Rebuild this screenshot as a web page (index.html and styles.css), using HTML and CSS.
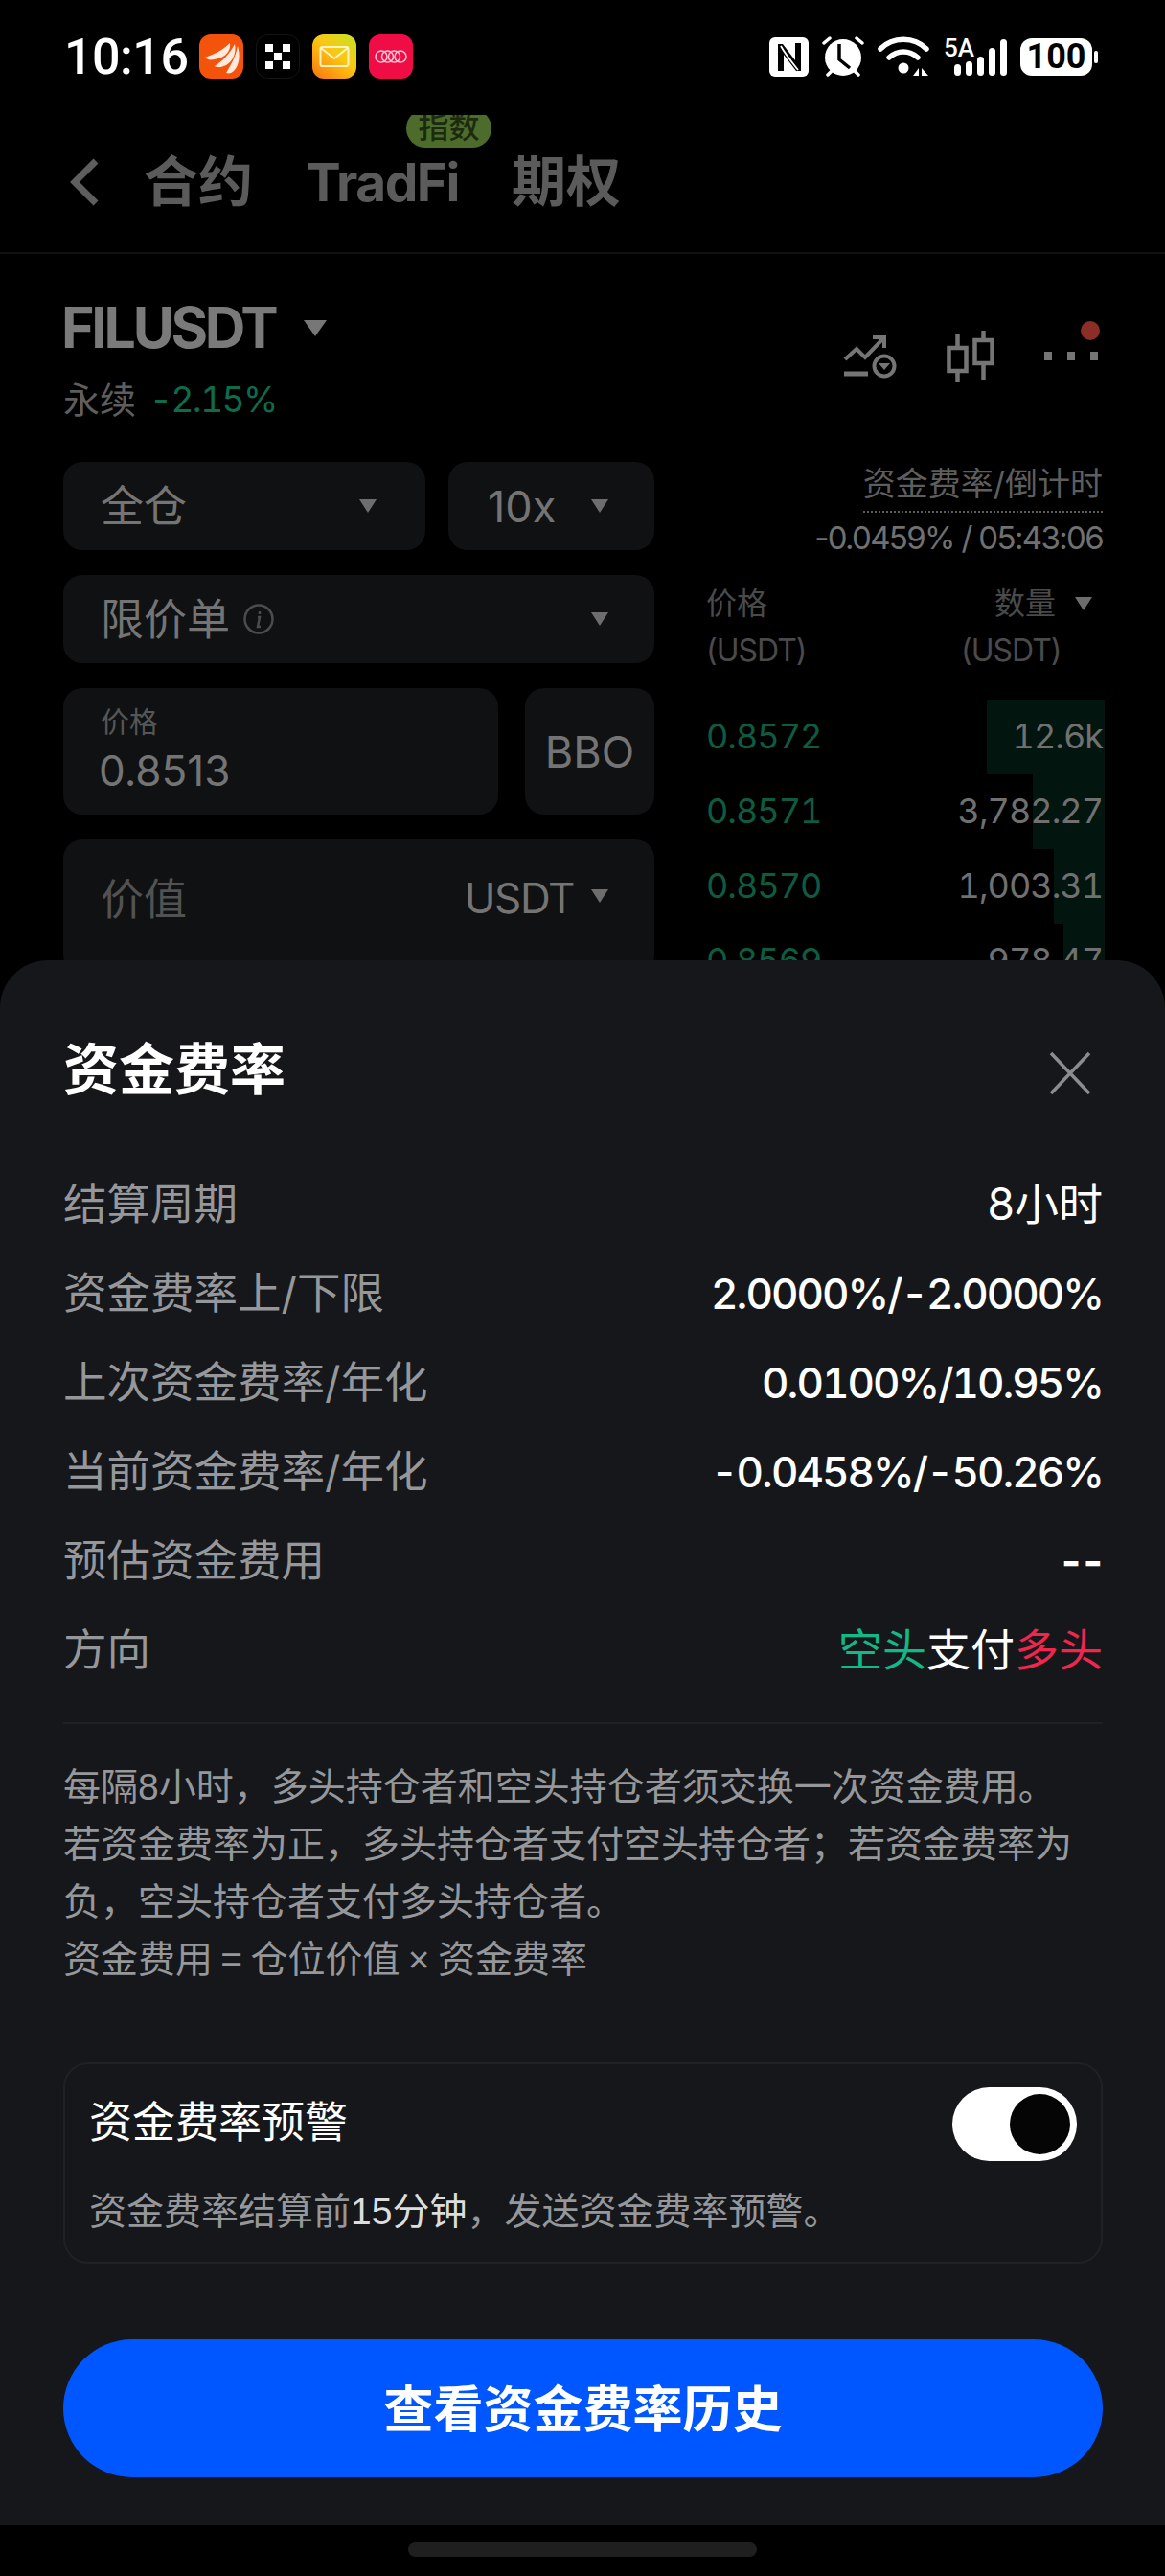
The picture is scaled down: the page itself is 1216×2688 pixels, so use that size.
FILE: index.html
```html
<!DOCTYPE html>
<html lang="zh-CN">
<head>
    <meta charset="UTF-8">
    <meta name="viewport" content="width=device-width, initial-scale=1.0">
    <title>资金费率</title>
    <link rel="stylesheet" href="styles.css">
</head>
<body>
<div class="screen">

    <!-- Status bar -->
    <div class="status">
        <span class="time">10:16</span>
        <div class="app-icons">
            <svg class="app" viewBox="0 0 46 46"><rect width="46" height="46" rx="12" fill="#f4530c"/><path d="M6 24C14 21 24 17 32 9c1 7-3 12-9 15-6 2-11 3-14 2z" fill="#ffe9dc"/><path d="M16 33c8-5 15-12 21-23 2 9-2 18-9 22-4 2-9 3-12 1z" fill="#ffe9dc"/><path d="M28 40c5-8 10-17 12-28 3 9 2 20-4 26-2 2-5 3-8 2z" fill="#ffe9dc"/></svg>
            <svg class="app" viewBox="0 0 46 46"><rect x=".5" y=".5" width="45" height="45" rx="12" fill="#000" stroke="#141414"/><path d="M10 10h8v8h-8zM28 10h8v8h-8zM19 19h8v8h-8zM10 28h8v8h-8zM28 28h8v8h-8z" fill="#fff"/></svg>
            <svg class="app" viewBox="0 0 46 46"><defs><linearGradient id="mailbg" x1="0.9" y1="0" x2="0.1" y2="1"><stop offset="0" stop-color="#c6e224"/><stop offset=".45" stop-color="#fbc712"/><stop offset="1" stop-color="#fb7a10"/></linearGradient></defs><rect width="46" height="46" rx="12" fill="url(#mailbg)"/><rect x="8.500" y="13" width="29" height="20" rx="2" fill="none" stroke="#fff3c4" stroke-width="2"/><path d="M9 14l14 11 14-11" fill="none" stroke="#fff3c4" stroke-width="2"/></svg>
            <svg class="app" viewBox="0 0 46 46"><rect width="46" height="46" rx="12" fill="#f00c45"/><g fill="none" stroke="#ffc6d4" stroke-width="1.600"><circle cx="13" cy="23" r="6"/><circle cx="19.500" cy="23" r="6"/><circle cx="26.500" cy="23" r="6"/><circle cx="33" cy="23" r="6"/></g></svg>
        </div>
        <div class="sys-icons">
            <svg class="sys-nfc" viewBox="0 0 41 41"><rect width="41" height="41" rx="6" fill="#fff"/><path d="M9 35V7h5l13 17V6h6v29h-5L15 18v17z" fill="#000"/><path d="M12 9c5 9 10 15 18 25" fill="none" stroke="#fff" stroke-width="1.800"/></svg>
            <svg class="sys-alarm" viewBox="0 0 44 42"><circle cx="22" cy="22" r="19" fill="#fff"/><path d="M2 7l6-5M42 7l-6-5M6 40l4-4M38 40l-4-4" stroke="#fff" stroke-width="3.500" stroke-linecap="round"/><path d="M18 8v16l11 9" fill="none" stroke="#000" stroke-width="3.500"/></svg>
            <svg class="sys-wifi" viewBox="0 0 55 42"><g fill="none" stroke="#fff" stroke-width="5.500" stroke-linecap="round"><path d="M3 13C16 0 38 0 51 13"/><path d="M12 22c9-8 21-8 30 0"/></g><circle cx="27" cy="33" r="5.500" fill="#fff"/><path d="M37 41l6-8v8zM46 33l7 8h-7z" fill="#fff"/></svg>
            <div class="signal">
                <span class="signal-label">5A</span>
                <div class="bars"><i class="bar1"></i><i class="bar2"></i><i class="bar3"></i><i class="bar4"></i><i class="bar5"></i></div>
            </div>
            <div class="battery"><span class="battery-body">100</span><i class="battery-nub"></i></div>
        </div>
    </div>

    <!-- Top tabs -->
    <div class="tabs">
        <svg class="back" viewBox="0 0 34 50"><path d="M29 3L7 25l22 22" fill="none" stroke="#5e5e5e" stroke-width="7"/></svg>
        <span class="tab">合约</span>
        <span class="tab tab-badged">TradFi<em class="badge">指数</em></span>
        <span class="tab">期权</span>
    </div>

    <!-- Dimmed market page -->
    <div class="market">
        <div class="symbol-row">
            <div>
                <div class="symbol">FILUSDT <i class="caret caret-lg"></i></div>
                <div class="symbol-sub"><span>永续</span><span class="down">-2.15%</span></div>
            </div>
            <div class="tools">
                <svg class="tool-alert" viewBox="0 0 56 46"><path d="M2 26l12-11 9 9L43 3M31 3h12v11" fill="none" stroke="#757575" stroke-width="4"/><path d="M1 41h25" stroke="#757575" stroke-width="5"/><circle cx="43" cy="33" r="10.500" fill="none" stroke="#757575" stroke-width="4"/><path d="M37 30h12l-6 7z" fill="#757575"/></svg>
                <svg class="tool-candle" viewBox="0 0 50 54"><g fill="none" stroke="#757575" stroke-width="4.500"><rect x="2.500" y="18" width="18" height="24"/><rect x="29.500" y="10" width="18" height="24"/><path d="M11.500 3v15M11.500 42v12M38.500 0v10M38.500 34v17"/></g></svg>
                <div class="tool-more"><i></i><i></i><i></i><em class="red-dot"></em></div>
            </div>
        </div>

        <div class="trade">
            <div class="form">
                <div class="form-row">
                    <div class="field field-margin"><span class="cjk">全仓</span><i class="caret"></i></div>
                    <div class="field field-lev"><span>10x</span><i class="caret"></i></div>
                </div>
                <div class="field field-type">
                    <span class="order-type"><span class="cjk">限价单</span>
                        <svg class="info" viewBox="0 0 32 32"><circle cx="16" cy="16" r="14.500" fill="none" stroke="#4c4c4c" stroke-width="2.500"/><path d="M17 8v3M15 14h2l-2 10h3" fill="none" stroke="#4c4c4c" stroke-width="2.500"/></svg>
                    </span>
                    <i class="caret"></i>
                </div>
                <div class="form-row form-row-price">
                    <div class="field field-price">
                        <span class="field-label">价格</span>
                        <span class="price-value">0.8513</span>
                    </div>
                    <div class="field field-bbo">BBO</div>
                </div>
                <div class="field field-amount">
                    <span class="muted">价值</span>
                    <span class="unit"><span class="unit-name">USDT</span><i class="caret"></i></span>
                </div>
            </div>

            <div class="book">
                <div class="funding">
                    <span class="funding-label">资金费率/倒计时</span>
                    <span class="funding-value">-0.0459% / 05:43:06</span>
                </div>
                <div class="book-head">
                    <div>价格<br><span class="book-unit">(USDT)</span></div>
                    <div class="book-head-right">数量 <i class="caret caret-sm"></i><br><span class="book-unit book-unit-right">(USDT)</span></div>
                </div>
                <div class="book-row"><i class="depth" style="width: 123px"></i><span class="ask">0.8572</span><span class="qty">12.6k</span></div>
                <div class="book-row"><i class="depth" style="width: 75px"></i><span class="ask">0.8571</span><span class="qty">3,782.27</span></div>
                <div class="book-row"><i class="depth" style="width: 53px"></i><span class="ask">0.8570</span><span class="qty">1,003.31</span></div>
                <div class="book-row"><i class="depth" style="width: 43px"></i><span class="ask">0.8569</span><span class="qty">978.47</span></div>
            </div>
        </div>
    </div>

    <!-- Funding rate sheet -->
    <div class="overlay">
        <div class="sheet">
            <div class="sheet-head">
                <h2 class="sheet-title">资金费率</h2>
                <svg class="close" viewBox="0 0 44 46"><path d="M2 2l40 42M42 2L2 44" fill="none" stroke="#8a8c8f" stroke-width="3.500"/></svg>
            </div>

            <div class="info-rows">
                <div class="info-row"><span>结算周期</span><b>8小时</b></div>
                <div class="info-row"><span>资金费率上/下限</span><b class="num">2.0000%/-2.0000%</b></div>
                <div class="info-row"><span>上次资金费率/年化</span><b class="num">0.0100%/10.95%</b></div>
                <div class="info-row"><span>当前资金费率/年化</span><b class="num">-0.0458%/-50.26%</b></div>
                <div class="info-row"><span>预估资金费用</span><b class="num dashes">--</b></div>
                <div class="info-row"><span>方向</span><b><span class="short">空头</span>支付<span class="long">多头</span></b></div>
            </div>

            <div class="note">
                每隔8小时，多头持仓者和空头持仓者须交换一次资金费用。<br>
                若资金费率为正，多头持仓者支付空头持仓者；若资金费率为<br>
                负，空头持仓者支付多头持仓者。<br>
                <span class="formula">资金费用 = 仓位价值 × 资金费率</span>
            </div>

            <div class="alert-card">
                <div class="alert-top">
                    <span class="alert-title">资金费率预警</span>
                    <div class="toggle"><i class="knob"></i></div>
                </div>
                <p class="alert-text">资金费率结算前<span class="hl">15分钟</span>，发送资金费率预警。</p>
            </div>

            <button class="history-btn"><span>查看资金费率历史</span></button>
        </div>
        <div class="nav-bar"><i class="home-pill"></i></div>
    </div>

</div>
</body>
</html>
```

FILE: styles.css
```css
* {
    box-sizing: border-box;
}
body {
    margin: 0;
    background: #000;
    font-family: Inter, "Noto Sans CJK SC", sans-serif;
}
i, em {
    font-style: normal;
}
.screen {
    position: relative;
    width: 1216px;
    height: 2688px;
    overflow: hidden;
    background: #000;
}

/* status bar */
.status {
    display: flex;
    align-items: center;
    height: 120px;
    padding: 0 70px 2px 67px;
}
.time {
    font-family: Roboto, sans-serif;
    font-size: 52px;
    font-weight: 500;
    letter-spacing: -0.500px;
    color: #fff;
    width: 141px;
}
.app-icons {
    display: flex;
    gap: 13px;
}
.app {
    width: 46px;
    height: 46px;
}
.sys-icons {
    margin-left: auto;
    display: flex;
    align-items: center;
    gap: 14px;
}
.sys-nfc {
    width: 41px;
    height: 41px;
}
.sys-alarm {
    width: 44px;
    height: 42px;
}
.sys-wifi {
    width: 55px;
    height: 42px;
}
.signal {
    position: relative;
    width: 66px;
    height: 42px;
}
.signal-label {
    position: absolute;
    left: 0;
    top: -3px;
    font-family: Roboto, sans-serif;
    font-size: 26px;
    font-weight: 500;
    line-height: 30px;
    color: #fff;
}
.bars {
    position: absolute;
    right: 0;
    bottom: 1px;
    display: flex;
    align-items: flex-end;
    gap: 4.500px;
}
.bars i {
    display: block;
    width: 7.500px;
    background: #fff;
    border-radius: 4px;
}
.bar1 { height: 12px; }
.bar2 { height: 15px; }
.bar3 { height: 20px; }
.bar4 { height: 29px; }
.bar5 { height: 38px; }
.battery {
    display: flex;
    align-items: center;
    gap: 2px;
}
.battery-body {
    width: 75px;
    height: 39px;
    background: #fff;
    border-radius: 12px;
    color: #000;
    font-family: Roboto, sans-serif;
    font-size: 36px;
    font-weight: 700;
    line-height: 39px;
    text-align: center;
}
.battery-nub {
    width: 4px;
    height: 13px;
    background: #fff;
    border-radius: 2px;
}

/* tabs */
.tabs {
    display: flex;
    align-items: center;
    height: 145px;
    padding: 0 0 4px 71px;
    overflow: hidden;
    border-bottom: 2px solid #101010;
}
.back {
    width: 34px;
    height: 50px;
    margin-right: 45px;
}
.tab {
    position: relative;
    font-size: 57px;
    font-weight: 700;
    color: #5b5b5b;
    margin-right: 55px;
    line-height: 64px;
}
.tab-badged {
    font-size: 55px;
    letter-spacing: -1.500px;
}
.badge {
    position: absolute;
    left: 105px;
    top: -44px;
    width: 89px;
    height: 40px;
    border-radius: 20px;
    background: #4d6b2b;
    color: #1c2b0d;
    font-size: 32px;
    font-weight: 500;
    line-height: 38px;
    letter-spacing: 0;
    text-align: center;
}

/* market page behind the sheet */
.market {
    padding: 47px 65px 0 66px;
}
.symbol-row {
    display: flex;
    justify-content: space-between;
}
.symbol {
    display: flex;
    align-items: center;
    gap: 30px;
    margin-left: -2px;
    font-size: 59px;
    font-weight: 700;
    line-height: 60px;
    letter-spacing: -3.300px;
    color: #7a7a7a;
}
.symbol-sub {
    display: flex;
    gap: 14px;
    margin-top: 23px;
    height: 41px;
    font-size: 38px;
    line-height: 44px;
    color: #5e5e5e;
}
.down {
    color: #0e6b4b;
    font-size: 37px;
    font-variant-numeric: tabular-nums;
    letter-spacing: -1.600px;
}
.caret {
    display: block;
    width: 0;
    height: 0;
    border-left: 9px solid transparent;
    border-right: 9px solid transparent;
    border-top: 14px solid #6d6d6d;
}
.symbol .caret-lg {
    border-left-width: 12px;
    border-right-width: 12px;
    border-top-width: 17px;
    border-top-color: #777;
}
.caret-sm {
    display: inline-block;
    margin: 0 3px 5px 11px;
    vertical-align: middle;
}
.tools {
    display: flex;
    align-items: flex-start;
    padding-top: 33px;
    gap: 52px;
    margin-right: 3px;
}
.tool-alert {
    width: 56px;
    height: 46px;
    margin-top: 4px;
}
.tool-candle {
    width: 50px;
    height: 54px;
}
.tool-more {
    position: relative;
    display: flex;
    gap: 16px;
    width: 58px;
    margin-top: 22px;
}
.tool-more i {
    width: 8px;
    height: 9px;
    background: #757575;
}
.red-dot {
    position: absolute;
    right: 0;
    top: -32px;
    width: 20px;
    height: 20px;
    border-radius: 50%;
    background: #8c2e28;
}

.trade {
    display: grid;
    grid-template-columns: 617px 414px;
    column-gap: 54px;
    margin-top: 46px;
}
.form {
    display: flex;
    flex-direction: column;
    gap: 26px;
}
.form-row {
    display: flex;
    gap: 24px;
}
.form-row-price {
    gap: 28px;
}
.field {
    display: flex;
    align-items: center;
    justify-content: space-between;
    height: 92px;
    padding: 0 48px 0 39px;
    background: #0f1113;
    border-radius: 20px;
    font-size: 45px;
    color: #747474;
}
.field-margin {
    width: 378px;
    padding-right: 51px;
}
.field-lev {
    width: 215px;
    padding-left: 41px;
}
.cjk {
    font-size: 45px;
    margin-bottom: 5px;
}
.order-type {
    display: flex;
    align-items: center;
    gap: 14px;
}
.info {
    width: 32px;
    height: 32px;
}
.field-price {
    display: block;
    width: 454px;
    height: 132px;
    padding-top: 16px;
}
.field-label {
    display: block;
    font-size: 30px;
    line-height: 38px;
    color: #555;
}
.price-value {
    display: block;
    margin: 6px 0 0 -2px;
    font-size: 44px;
    line-height: 52px;
}
.field-bbo {
    justify-content: center;
    width: 135px;
    height: 132px;
    padding: 0;
    font-size: 45px;
}
.field-amount {
    height: 140px;
    padding-bottom: 22px;
}
.muted {
    font-size: 45px;
    color: #525252;
}
.unit {
    display: flex;
    align-items: center;
    gap: 18px;
}
.unit-name {
    padding-top: 3px;
    font-size: 44px;
    letter-spacing: -1.400px;
}

.book {
    font-size: 33px;
    color: #666;
}
.funding {
    display: flex;
    flex-direction: column;
    align-items: flex-end;
    height: 98px;
    margin-top: 4px;
}
.funding-label {
    font-size: 34px;
    line-height: 38px;
    padding-bottom: 9px;
    border-bottom: 2px dotted #5e5e5e;
    color: #5e5e5e;
    letter-spacing: 0;
}
.funding-value {
    margin-top: 7px;
    line-height: 38px;
    letter-spacing: -1.650px;
    color: #707070;
    white-space: nowrap;
}
.book-head {
    display: flex;
    justify-content: space-between;
    height: 146px;
    padding-top: 21px;
    font-size: 32px;
    line-height: 49px;
    color: #4a4a4a;
}
.book-head-right {
    margin-right: 8px;
    white-space: nowrap;
}
.book-unit {
    letter-spacing: -1px;
}
.book-unit-right {
    margin-left: -35px;
}
.book-row {
    position: relative;
    display: flex;
    justify-content: space-between;
    align-items: center;
    height: 78px;
    padding-bottom: 2px;
    font-size: 36px;
    font-variant-numeric: tabular-nums;
    letter-spacing: -1px;
}
.book-row span {
    position: relative;
}
.depth {
    position: absolute;
    top: 0;
    right: -2px;
    bottom: 0;
    background: #02150e;
}
.ask {
    color: #0d5c42;
}
.qty {
    color: #707070;
}

/* sheet */
.overlay {
    position: absolute;
    left: 0;
    right: 0;
    bottom: 0;
}
.sheet {
    height: 1633px;
    padding: 72px 65px 0 66px;
    background: #15171a;
    border-radius: 50px 50px 0 0;
}
.sheet-head {
    display: flex;
    justify-content: space-between;
    align-items: center;
    height: 84px;
}
.sheet-title {
    margin: 0;
    font-size: 58px;
    font-weight: 700;
    line-height: 84px;
    color: #fff;
}
.close {
    width: 44px;
    height: 46px;
    margin: 8px 12px 0 0;
}
.info-rows {
    margin-top: 48px;
    padding-bottom: 33px;
    border-bottom: 2px solid #1f2225;
}
.info-row {
    display: flex;
    justify-content: space-between;
    align-items: center;
    height: 93px;
    font-size: 45.500px;
    color: #95979a;
}
.info-row b {
    font-size: 46px;
    font-weight: 400;
    color: #fff;
}
.info-row .num {
    padding-top: 8px;
    font-size: 44px;
    font-weight: 500;
    font-variant-numeric: tabular-nums;
    letter-spacing: -2px;
}
.info-row .dashes {
    font-variant-numeric: normal;
    font-weight: 700;
    letter-spacing: 2px;
    margin-right: -2px;
}
.short {
    color: #12b886;
}
.long {
    color: #f0264f;
}
.note {
    margin-top: 36px;
    font-family: "Liberation Sans", "Noto Sans CJK SC", sans-serif;
    font-size: 39px;
    line-height: 60px;
    color: #95979a;
    white-space: nowrap;
}
.formula {
    word-spacing: -2.500px;
}
.alert-card {
    margin-top: 77px;
    height: 210px;
    padding: 24px 25px 0 25px;
    border: 2px solid #1f2225;
    border-radius: 26px;
}
.alert-top {
    display: flex;
    justify-content: space-between;
    align-items: center;
}
.alert-title {
    margin-bottom: 10px;
    font-size: 45px;
    color: #fff;
}
.toggle {
    display: flex;
    justify-content: flex-end;
    align-items: center;
    width: 130px;
    height: 77px;
    padding-right: 7px;
    background: #fff;
    border-radius: 39px;
}
.knob {
    width: 63px;
    height: 63px;
    border-radius: 50%;
    background: #050505;
}
.alert-text {
    margin: 30px 0 0;
    font-family: "Liberation Sans", "Noto Sans CJK SC", sans-serif;
    font-size: 39px;
    line-height: 46px;
    color: #95979a;
}
.hl {
    color: #ddd;
}
.history-btn {
    display: block;
    width: 100%;
    height: 144px;
    margin-top: 79px;
    padding: 0 0 5px;
    border: none;
    border-radius: 72px;
    background: #0057ff;
    color: #fff;
    font-family: inherit;
    font-size: 52px;
    font-weight: 700;
}
.nav-bar {
    display: flex;
    justify-content: center;
    height: 53px;
    padding-top: 18px;
    background: #000;
}
.home-pill {
    width: 364px;
    height: 15px;
    background: #1f1f1f;
    border-radius: 8px;
}
```
